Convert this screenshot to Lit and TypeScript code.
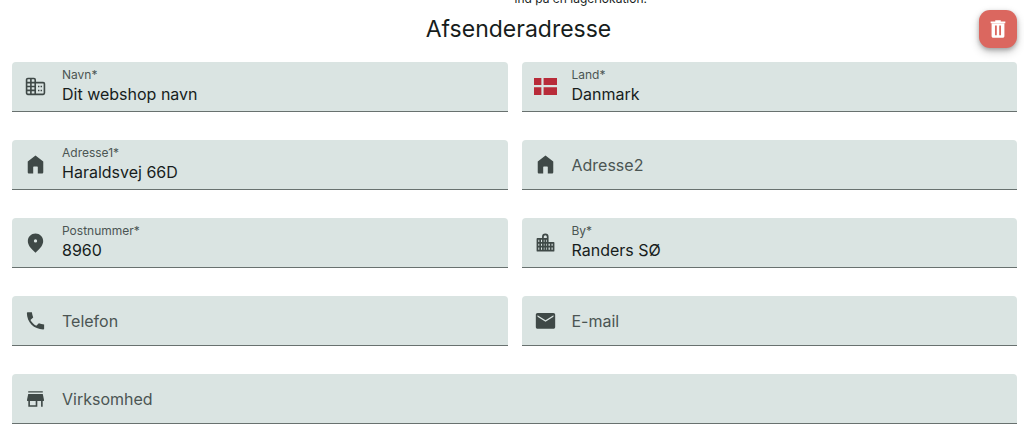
import { LitElement, html, css, svg, nothing, SVGTemplateResult } from "lit";
import { customElement, property } from "lit/decorators.js";

const icons: Record<string, SVGTemplateResult> = {
  domain: svg`<g fill="none" stroke="currentColor" stroke-width="1.7" stroke-linejoin="round">
      <path d="M11.7 20.2H4a1.3 1.3 0 0 1-1.3-1.3V5A1.3 1.3 0 0 1 4 3.7h6.4A1.3 1.3 0 0 1 11.7 5v15.2h8.3a1.3 1.3 0 0 0 1.3-1.3V9.2a1.3 1.3 0 0 0-1.3-1.3h-8.3"/>
      <path d="M7.2 3.7v16.500M2.7 7.9h9M2.700 12h9M2.700 16.100h9"/>
    </g>
    <path d="M14.600 11.200h1.500v1.600h-1.500zM14.600 15.300h1.500v1.600h-1.500zM17.300 11.200h1.500v1.600h-1.500zM17.300 15.300h1.500v1.600h-1.500z"/>`,
  flag: svg`<path fill="#b82b39" d="M-.3 3.100h8v7.300h-8zM10 3.100h14.300v7.300H10zM-.3 12.800h8v8h-8zM10 12.800h14.300v8H10z"/>`,
  home: svg`<path d="M12 2.600 3.900 8.900v11.200c0 .8.600 1.400 1.400 1.400h4.300v-6.800c0-.4.300-.7.700-.7h3.400c.4 0 .7.300.7.700v6.800h4.300c.8 0 1.400-.6 1.400-1.400V8.900z"/>`,
  place: svg`<path fill-rule="evenodd" d="M12 2.500c-4.400 0-8 3.400-8 7.900 0 3.900 2.700 7.700 8 12.200 5.300-4.500 8-8.300 8-12.200 0-4.500-3.600-7.900-8-7.900zm0 6.200a1.700 1.700 0 1 1 0 3.400 1.700 1.700 0 0 1 0-3.400z"/>`,
  city: svg`<g fill="none" stroke="currentColor" stroke-width="1.800" stroke-linejoin="round">
      <path d="M9.300 20.500V6c0-1.500 1.100-2.500 2.500-2.500s2.500 1 2.500 2.500v14.500M9.300 8.300H3.600v12.200h16.800v-8.200h-6.100M6.400 8.300v12.200M11.800 8.300v12.200M17.400 12.300v8.200M9.300 8.300h5M3.600 12.300h10.700M3.600 16.400h16.800"/>
    </g>`,
  phone: svg`<path d="M8.200 3.300c.3 2 .8 3.800 1.400 5.500L6.700 11.500c1.500 2.700 3.400 4.600 6.100 6.100l2.700-2.800c1.700.7 3.500 1.100 5.500 1.400v4.300c0 .5-.4.800-.9.800C10.500 21.300 3 13.800 3 4.200c0-.5.300-.9.800-.9z"/>`,
  mail: svg`<path fill-rule="evenodd" d="M3.800 4.200h16.400c1.100 0 1.900.8 1.900 1.900v12.600c0 1.100-.8 1.900-1.900 1.900H3.800c-1.100 0-1.900-.8-1.900-1.900V6.100c0-1.100.8-1.900 1.900-1.900zM12 13.300l8.300-5.300V6.400L12 11.700 3.700 6.400V8z"/>`,
  store: svg`<path fill-rule="evenodd" d="M4.400 4.400h15.200v1.400H4.400zM4.400 7.400h15.200l1.200 5.700v1.500h-1.300v6h-1.700v-6h-3.900v6H4.500v-6H3.200v-1.500zM6.200 14.600V19h6v-4.400z"/>`,
  trash: svg`<path fill-rule="evenodd" d="M9 2.500h6v1.300h5v2H4v-2h5zM5 6h14v13.500c0 1.300-.8 2-2 2H7c-1.200 0-2-.7-2-2zM8.700 8.200v10.500h2V8.200zM13.300 8.200v10.500h2V8.200z"/>`,
};

const icon = (name: string) =>
  html`<svg viewBox="0 0 24 24" fill="currentColor" aria-hidden="true">${icons[name]}</svg>`;

@customElement("form-field")
class FormField extends LitElement {
  @property() label = "";
  @property() value = "";
  @property() icon = "";
  @property({ type: Boolean }) required = false;

  static styles = css`
    :host {
      display: block;
      min-width: 0;
    }
    .field {
      display: flex;
      align-items: center;
      gap: 15px;
      height: 49px;
      padding: 0 12px;
      background: #dae4e2;
      border-bottom: 1px solid #68716f;
      border-radius: 4px 4px 0 0;
      color: #3f4947;
    }
    svg {
      display: block;
      flex: none;
      width: 23px;
      height: 23px;
    }
    .text {
      display: grid;
      flex: 1;
      min-width: 0;
      padding-bottom: 2px;
    }
    label {
      font-size: 12px;
      line-height: 16px;
      color: #4b5553;
    }
    input {
      width: 100%;
      box-sizing: border-box;
      margin: 0;
      padding: 0;
      border: 0;
      outline: 0;
      background: none;
      font: inherit;
      font-size: 16px;
      line-height: 22px;
      height: 22px;
      color: #171d1c;
    }
    .empty {
      align-items: center;
      padding-bottom: 0;
    }
    .empty label,
    .empty input {
      grid-area: 1 / 1;
      font-size: 16px;
      line-height: 24px;
    }
    .empty label {
      pointer-events: none;
    }
  `;

  render() {
    return html`<div class="field">
      ${icon(this.icon)}
      <div class="text ${this.value ? "" : "empty"}">
        <label for="control">${this.label}${this.required ? "*" : nothing}</label>
        <input
          id="control"
          .value=${this.value}
          ?required=${this.required}
          @change=${(e: Event) => (this.value = (e.target as HTMLInputElement).value)}
        />
      </div>
    </div>`;
  }
}

@customElement("app-root")
class AppRoot extends LitElement {
  static styles = css`
    :host {
      display: block;
      padding: 0 7px 6px 12px;
      font-family: Inter, "Liberation Sans", sans-serif;
      color: #171d1c;
      background: #fff;
    }
    .intro {
      display: flex;
      align-items: flex-end;
      height: 7px;
      margin: 0;
      padding-left: 50%;
      overflow: hidden;
      font-size: 12px;
      line-height: 16px;
    }
    header {
      display: grid;
      grid-template-columns: 1fr auto 1fr;
      align-items: center;
      padding: 3px 0 14px;
    }
    h1 {
      grid-column: 2;
      margin: 0;
      padding-left: 8px;
      font-size: 23px;
      line-height: 32px;
      font-weight: 400;
    }
    button {
      justify-self: end;
      display: grid;
      place-items: center;
      width: 38px;
      height: 38px;
      padding: 0;
      border: 0;
      border-radius: 11px;
      background: #db675f;
      color: #fff;
      box-shadow: 0 2px 4px rgba(0, 0, 0, 0.25), 0 4px 10px rgba(0, 0, 0, 0.2);
      cursor: pointer;
    }
    button svg {
      width: 22px;
      height: 22px;
    }
    form {
      display: grid;
      grid-template-columns: 1fr 1fr;
      gap: 28px 14px;
    }
    .wide {
      grid-column: 1 / -1;
    }
  `;

  render() {
    return html`
      <p class="intro">ind på en lagerlokation.</p>
      <header>
        <h1>Afsenderadresse</h1>
        <button type="button" aria-label="Slet">${icon("trash")}</button>
      </header>
      <form>
        <form-field label="Navn" value="Dit webshop navn" icon="domain" required></form-field>
        <form-field label="Land" value="Danmark" icon="flag" required></form-field>
        <form-field label="Adresse1" value="Haraldsvej 66D" icon="home" required></form-field>
        <form-field label="Adresse2" icon="home"></form-field>
        <form-field label="Postnummer" value="8960" icon="place" required></form-field>
        <form-field label="By" value="Randers SØ" icon="city" required></form-field>
        <form-field label="Telefon" icon="phone"></form-field>
        <form-field label="E-mail" icon="mail"></form-field>
        <form-field class="wide" label="Virksomhed" icon="store"></form-field>
      </form>
    `;
  }
}
